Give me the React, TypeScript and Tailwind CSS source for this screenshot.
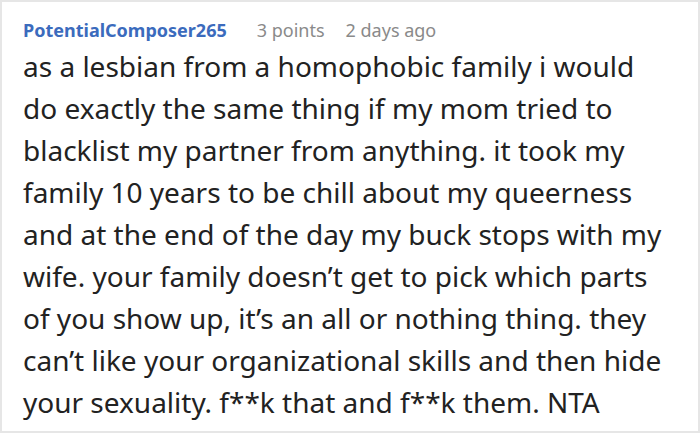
import React from "react";

const lines = [
  "as a lesbian from a homophobic family i would",
  "do exactly the same thing if my mom tried to",
  "blacklist my partner from anything. it took my",
  "family 10 years to be chill about my queerness",
  "and at the end of the day my buck stops with my",
  "wife. your family doesn’t get to pick which parts",
  "of you show up, it’s an all or nothing thing. they",
  "can’t like your organizational skills and then hide",
  "your sexuality. f**k that and f**k them. NTA",
];

export default function App() {
  return (
    <div className="w-[700px] h-[433px] bg-white border-2 border-[#e6e6e6] overflow-hidden font-['Noto_Sans',sans-serif]">
      <div className="pl-[21px] pt-[16px]">
        {/* Comment header */}
        <div className="flex items-baseline text-[18px] leading-[24px] whitespace-nowrap">
          <span className="font-bold text-[#3b6bbd]">PotentialComposer265</span>
          <span className="ml-[30px] text-[#8a8a8a]">3 points</span>
          <span className="ml-[21px] text-[#8a8a8a]">2 days ago</span>
        </div>

        {/* Comment body */}
        <div className="mt-[3px] text-[28px] leading-[42px] text-[#222222]">
          {lines.map((line) => (
            <div key={line} className="whitespace-nowrap">{line}</div>
          ))}
        </div>
      </div>
    </div>
  );
}
